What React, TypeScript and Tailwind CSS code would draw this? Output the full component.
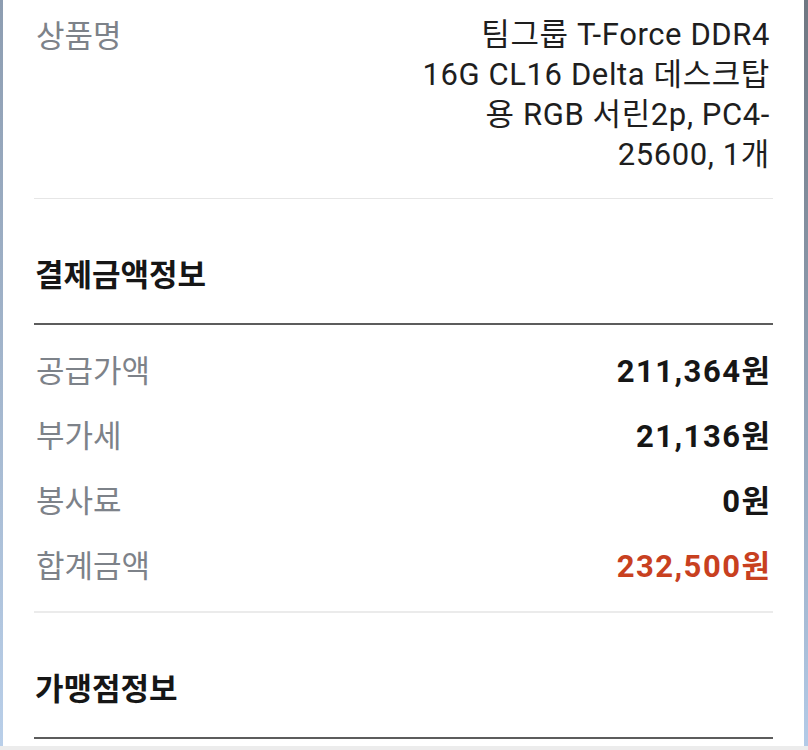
import React from 'react';

const rows = [
  { label: '공급가액', value: '211,364', unit: '원' },
  { label: '부가세', value: '21,136', unit: '원' },
  { label: '봉사료', value: '0', unit: '원' },
  { label: '합계금액', value: '232,500', unit: '원', total: true },
];

const productLines = ['팀그룹 T-Force DDR4', '16G CL16 Delta 데스크탑', '용 RGB 서린2p, PC4-', '25600, 1개'];

const font = { fontFamily: "Roboto, 'Noto Sans CJK KR', sans-serif" };

export default function App() {
  return (
    <div className="w-[808px] h-[750px] flex flex-col overflow-hidden bg-white" style={font}>
      <div className="flex flex-1 min-h-0">
        {/* left window edge */}
        <div className="w-[3px] bg-gradient-to-b from-[#8d9db1] to-[#b9cfe9]" />

        <div className="flex-1 bg-white px-[31px]">
          {/* product name */}
          <div className="flex justify-between pt-[15px] pb-[23px] border-b border-[#e6e6e6]">
            <span className="pl-[2px] text-[31px] leading-[44px] text-[#7d8289]">상품명</span>
            <p className="text-right text-[31px] leading-[40px] tracking-[0.6px] text-[#1e1e1e] pr-[3px] whitespace-nowrap">
              {productLines.map((l, i) => (
                <span key={i} className="block">{l}</span>
              ))}
            </p>
          </div>

          {/* payment info */}
          <h2 className="pt-[57px] pb-[27px] pl-[1px] text-[31px] leading-[40px] font-bold text-[#161616] border-b-2 border-[#5c5c5c]">
            결제금액정보
          </h2>
          <div className="pt-[14px] pb-[12px] border-b-2 border-[#ebebeb]">
            {rows.map(r => (
              <div key={r.label} className="flex justify-between items-center py-[12px]">
                <span className="pl-[2px] text-[31px] leading-[41px] text-[#7d8289]">{r.label}</span>
                <span className={`text-[31px] leading-[41px] font-bold pr-[3px] ${r.total ? 'text-[#c8401f]' : 'text-[#161616]'}`}>
                  <span className="tracking-[1.5px]">{r.value}</span>
                  {r.unit}
                </span>
              </div>
            ))}
          </div>

          {/* merchant info */}
          <h2 className="pt-[57px] pb-[27px] pl-[1px] text-[31px] leading-[40px] font-bold text-[#161616] border-b-2 border-[#5c5c5c]">
            가맹점정보
          </h2>
        </div>

        {/* right window edge */}
        <div className="w-[4px] bg-gradient-to-b from-[#6f7782] to-[#b3cbe8]" />
      </div>
      <div className="h-[4px] bg-[#ececec]" />
    </div>
  );
}
